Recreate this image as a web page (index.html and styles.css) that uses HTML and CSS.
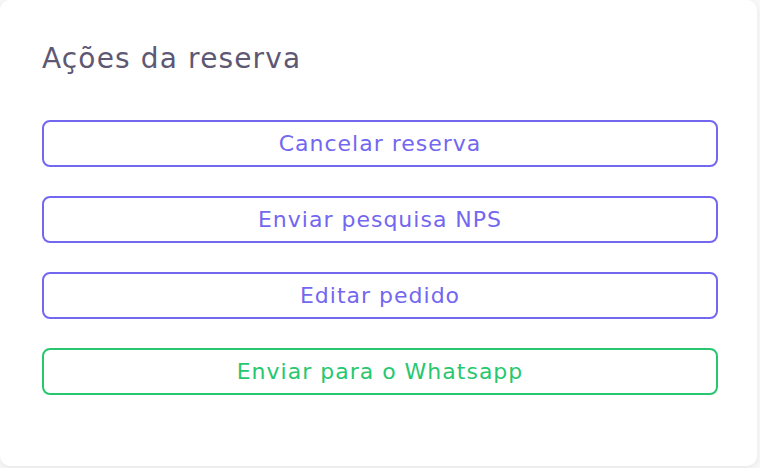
FILE: index.html
```html
<!DOCTYPE html>
<html lang="pt-BR">
<head>
    <meta charset="UTF-8">
    <meta name="viewport" content="width=device-width, initial-scale=1.0">
    <title>Ações da reserva</title>
    <link rel="stylesheet" href="styles.css">
</head>
<body>

    <!-- Card de ações -->
    <div class="card">
        <h4 class="card-title">Ações da reserva</h4>

        <div class="actions">
            <button class="btn btn-outline-primary">Cancelar reserva</button>
            <button class="btn btn-outline-primary">Enviar pesquisa NPS</button>
            <button class="btn btn-outline-primary">Editar pedido</button>
            <button class="btn btn-outline-success">Enviar para o Whatsapp</button>
        </div>
    </div>

</body>
</html>
```

FILE: styles.css
```css
/* Reset styles */
* {
    margin: 0;
    padding: 0;
    box-sizing: border-box;
}

body {
    font-family: 'DejaVu Sans', 'Open Sans', sans-serif;
    background-color: #f8f8f8;
    color: #6e6b7b;
    width: 760px;
    height: 468px;
    overflow: hidden;
}

.card {
    width: 757px;
    height: 466px;
    background-color: #fff;
    border-radius: 10px;
    box-shadow: 0 2px 6px rgba(34, 41, 47, 0.08);
    padding: 41px 39px 0 42px;
}

.card-title {
    font-size: 28px;
    font-weight: 400;
    line-height: 36px;
    letter-spacing: 1.15px;
    color: #5e5873;
    margin-bottom: 43px;
}

.actions {
    display: flex;
    flex-direction: column;
    gap: 29px;
}

.btn {
    height: 47px;
    background: transparent;
    border: 2px solid;
    border-radius: 8px;
    font-family: inherit;
    font-size: 22px;
    font-weight: 400;
    letter-spacing: 1px;
    cursor: pointer;
}

.btn-outline-primary {
    border-color: #7367f0;
    color: #7367f0;
}

.btn-outline-success {
    border-color: #28c76f;
    color: #28c76f;
}
```
